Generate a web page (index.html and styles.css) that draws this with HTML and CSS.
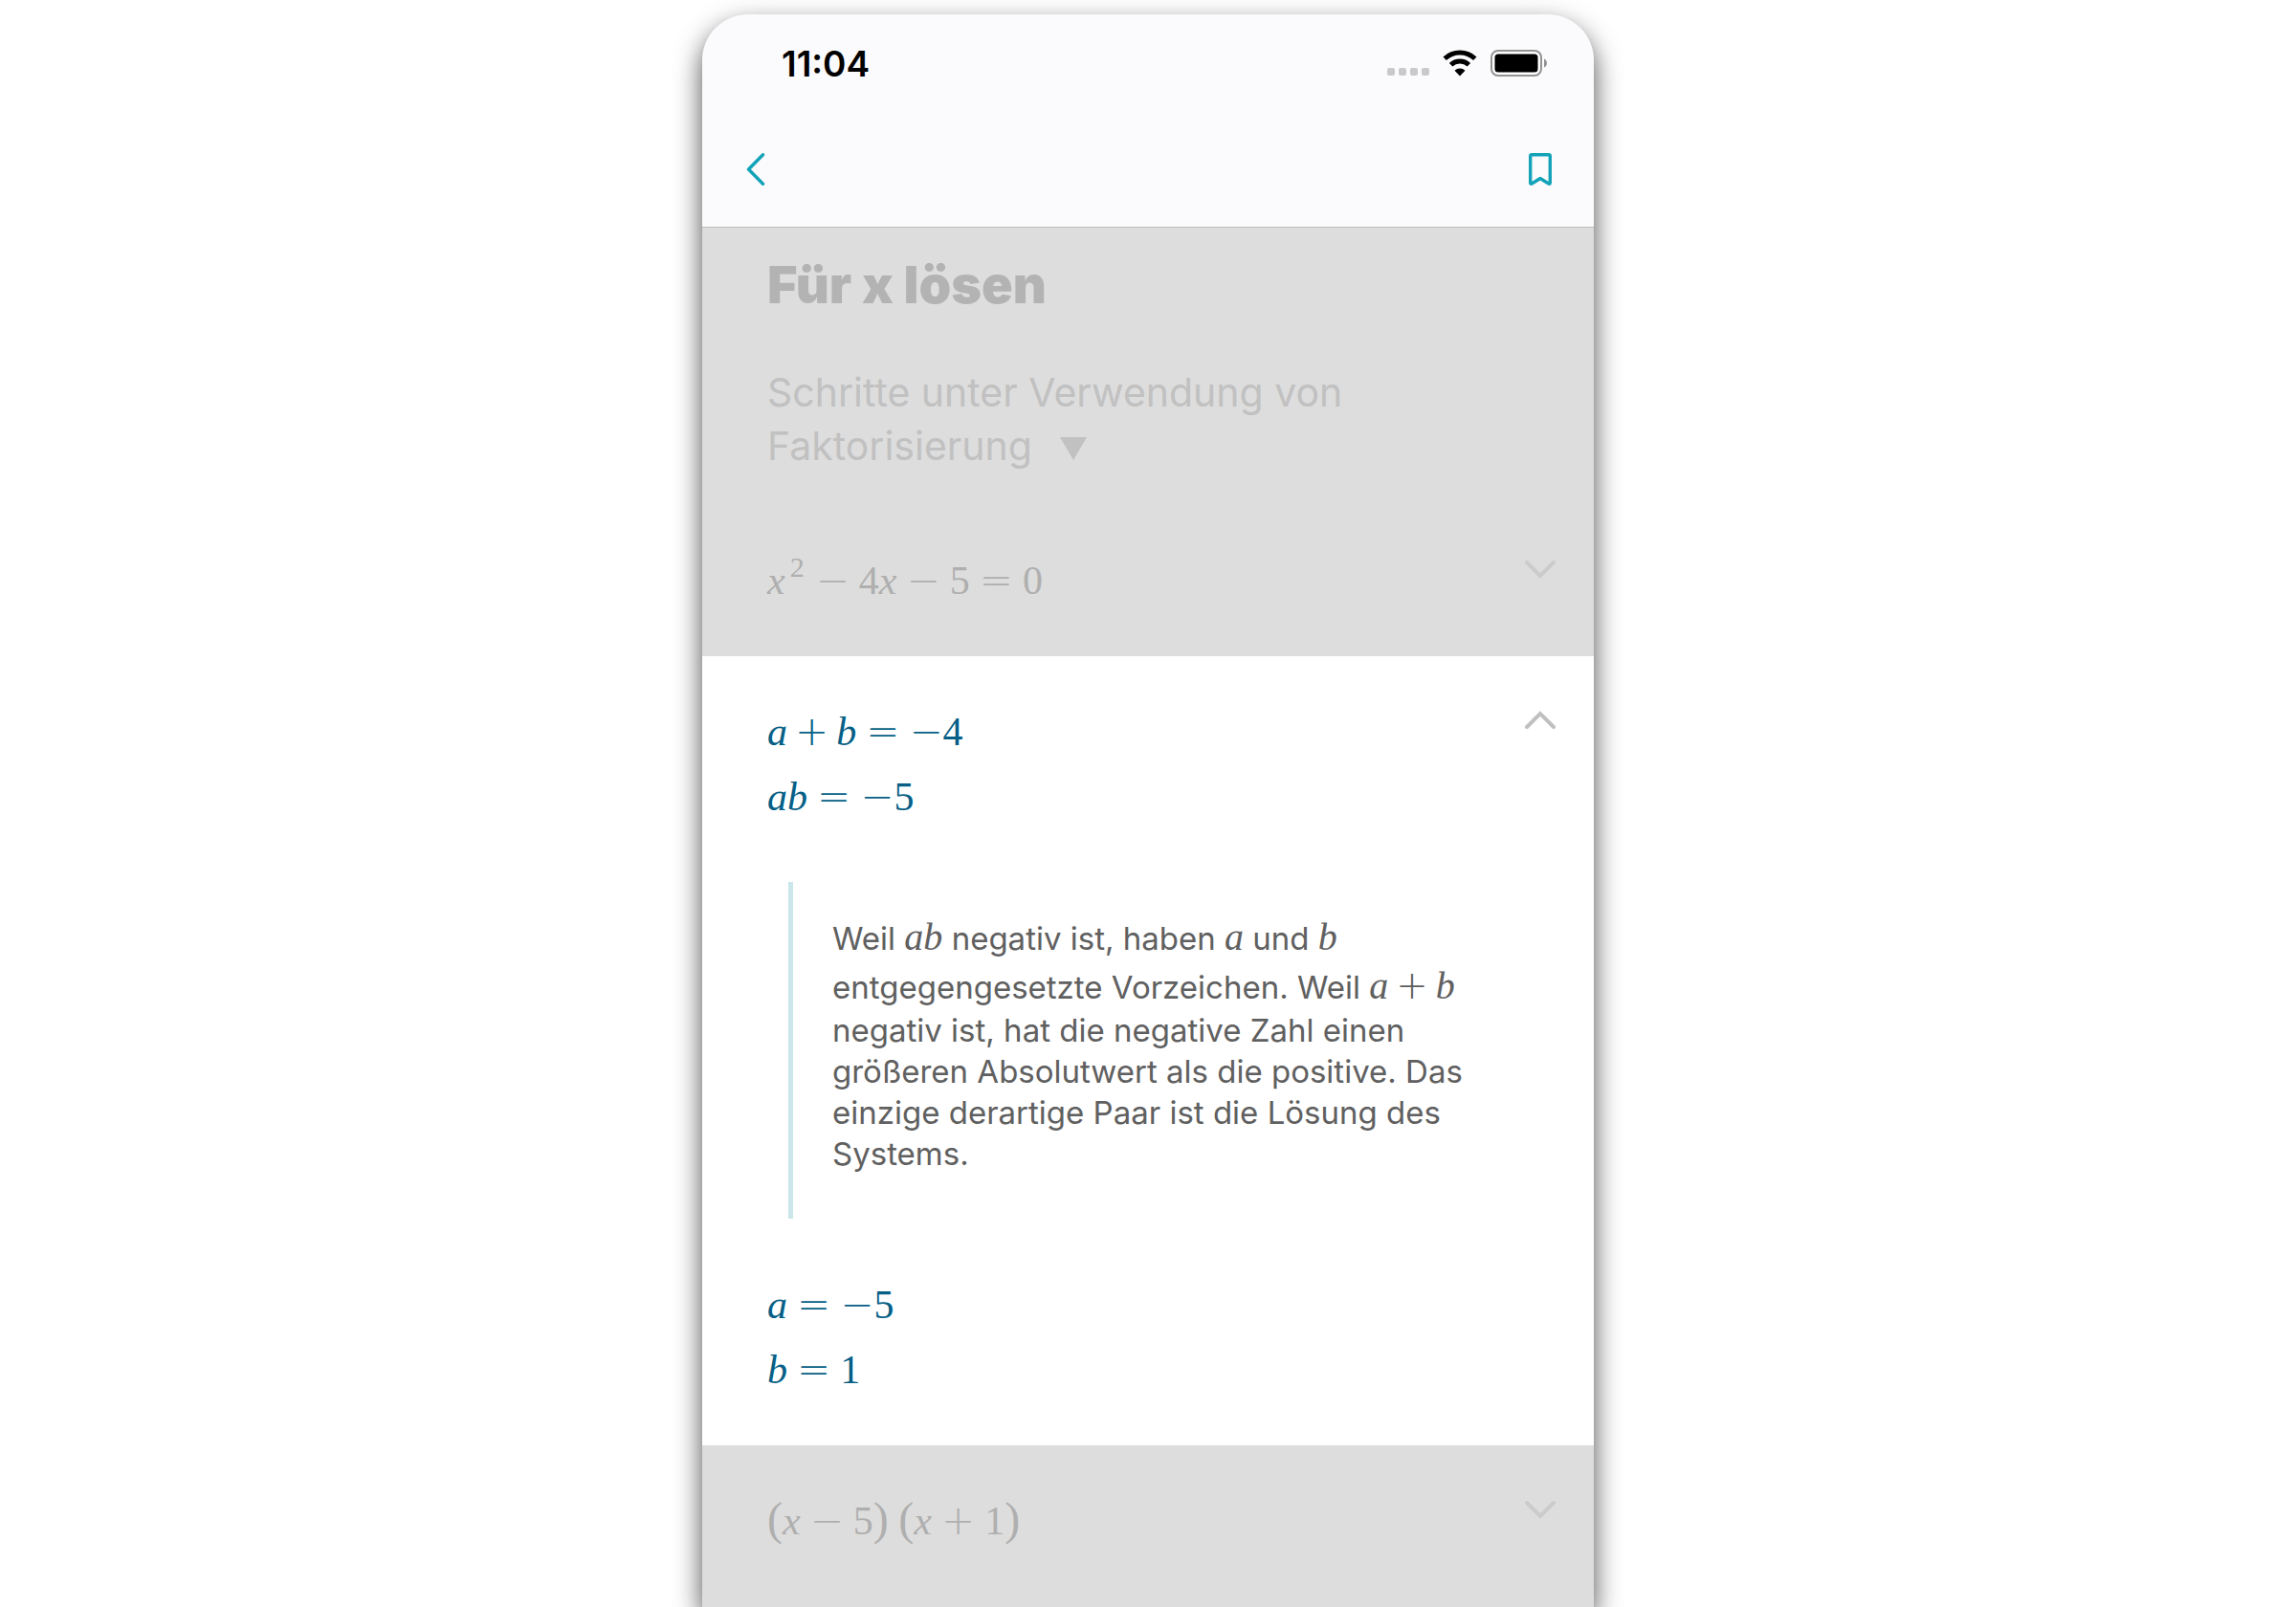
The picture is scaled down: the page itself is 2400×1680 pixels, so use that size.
FILE: index.html
```
<!DOCTYPE html>
<html lang="de">
<head>
    <meta charset="UTF-8">
    <meta name="viewport" content="width=device-width, initial-scale=1.0">
    <title>Für x lösen</title>
    <link rel="stylesheet" href="styles.css">
</head>
<body>
    <div class="phone">
        <header class="top">
            <div class="status-bar">
                <span class="time">11:04</span>
                <div class="status-icons">
                    <div class="signal"><i></i><i></i><i></i><i></i></div>
                    <svg class="wifi" viewBox="0 0 36 28" width="36" height="28">
                        <path d="M2.2 9.2A23 23 0 0 1 33.8 9.2" fill="none" stroke="#000" stroke-width="5"/>
                        <path d="M8.6 15.8A13.6 13.6 0 0 1 27.4 15.8" fill="none" stroke="#000" stroke-width="5"/>
                        <path d="M18 27.500L12.500 21.700A8 8 0 0 1 23.500 21.700Z"/>
                    </svg>
                    <svg class="battery" viewBox="0 0 60 28" width="60" height="28">
                        <rect x="1" y="1" width="52" height="26" rx="7" fill="#fff" stroke="#949494" stroke-width="2"/>
                        <rect x="4.500" y="4.500" width="45" height="19" rx="3.500"/>
                        <path d="M56 9.500Q59 11 59 14T56 18.500Z" fill="#949494"/>
                    </svg>
                </div>
            </div>
            <nav class="nav-bar">
                <button class="icon-btn" aria-label="Zurück">
                    <svg viewBox="0 0 20 34" width="20" height="34"><path d="M17.500 1.800L2.500 17L17.500 32.200"/></svg>
                </button>
                <button class="icon-btn" aria-label="Lesezeichen">
                    <svg viewBox="0 0 24 34" width="24" height="34"><path d="M1.700 3.200Q1.700 1.700 3.200 1.700H20.800Q22.300 1.700 22.300 3.200V31Q22.300 32.800 20.800 32L12 26.500L3.200 32Q1.700 32.800 1.700 31Z"/></svg>
                </button>
            </nav>
        </header>

        <main>
            <section class="intro">
                <h1>Für x lösen</h1>
                <button class="method">Schritte unter Verwendung von<br>Faktorisierung <span class="arrow"></span></button>
            </section>

            <section class="step dimmed">
                <div class="math"><p><i>x</i><sup>2</sup><b>−</b>4<i>x</i><b>−</b>5<b class="rel">=</b>0</p></div>
                <button class="toggle" aria-label="Aufklappen">
                    <svg viewBox="0 0 32 20" width="32" height="20"><path d="M2 3L16 17L30 3"/></svg>
                </button>
            </section>

            <section class="step open">
                <div class="step-body">
                    <div class="math">
                        <p><i>a</i><b class="plus">+</b><i>b</i><b class="rel">=</b><b class="neg">−</b>4</p>
                        <p><i>ab</i><b class="rel">=</b><b class="neg">−</b>5</p>
                    </div>
                    <blockquote>
                        Weil <span class="inline-math"><i>ab</i></span> negativ ist, haben <span class="inline-math"><i>a</i></span> und <span class="inline-math"><i>b</i></span><br>
                        entgegengesetzte Vorzeichen. Weil <span class="inline-math"><i>a</i><b class="plus">+</b><i>b</i></span><br>
                        negativ ist, hat die negative Zahl einen<br>
                        größeren Absolutwert als die positive. Das<br>
                        einzige derartige Paar ist die Lösung des<br>
                        Systems.
                    </blockquote>
                    <div class="math">
                        <p><i>a</i><b class="rel">=</b><b class="neg">−</b>5</p>
                        <p><i>b</i><b class="rel">=</b>1</p>
                    </div>
                </div>
                <button class="toggle" aria-label="Zuklappen">
                    <svg viewBox="0 0 32 20" width="32" height="20"><path d="M2 17L16 3L30 17"/></svg>
                </button>
            </section>

            <section class="step dimmed">
                <div class="math"><p><span class="paren">(</span><i>x</i><b>−</b>5<span class="paren">)</span> <span class="paren">(</span><i>x</i><b>+</b>1<span class="paren">)</span></p></div>
                <button class="toggle" aria-label="Aufklappen">
                    <svg viewBox="0 0 32 20" width="32" height="20"><path d="M2 3L16 17L30 3"/></svg>
                </button>
            </section>
        </main>
    </div>
</body>
</html>
```
FILE: styles.css
```
* {
    box-sizing: border-box;
}

body {
    margin: 0;
    padding-top: 15px;
    height: 100vh;
    overflow: hidden;
    background: #fff;
    font-family: Inter, "Liberation Sans", sans-serif;
}

p, h1, blockquote {
    margin: 0;
}

button {
    margin: 0;
    padding: 0;
    border: none;
    background: none;
    font: inherit;
    color: inherit;
    cursor: pointer;
}

svg {
    display: block;
}

/* Phone frame */
.phone {
    max-width: 932px;
    min-height: 100%;
    margin: 0 auto;
    border-radius: 48px 48px 0 0;
    background: #ddd;
    box-shadow: 0 12px 28px rgba(0, 0, 0, 0.7);
    overflow: hidden;
}

/* Status bar and navigation */
.top {
    background: #fbfbfd;
    border-bottom: 1px solid #bebebe;
}

.status-bar {
    display: flex;
    justify-content: space-between;
    align-items: center;
    height: 102px;
    padding: 0 48px 0 83px;
}

.time {
    font-size: 37px;
    font-weight: 600;
}

.status-icons {
    display: flex;
    align-items: center;
    gap: 14px;
}

.signal {
    display: flex;
    gap: 4px;
    padding-top: 18px;
}

.signal i {
    width: 8px;
    height: 8px;
    border-radius: 2px;
    background: #c9c9cb;
}

.nav-bar {
    display: flex;
    justify-content: space-between;
    align-items: center;
    height: 120px;
    padding: 0 44px 0 46px;
}

.icon-btn path {
    fill: none;
    stroke: #12a3b8;
    stroke-width: 3.4;
    stroke-linecap: round;
    stroke-linejoin: round;
}

/* Heading */
.intro {
    padding: 26px 68px 0;
}

h1 {
    font-size: 54px;
    font-weight: 900;
    line-height: 68px;
    color: #b3b3b3;
}

.method {
    margin-top: 50px;
    font-size: 41px;
    line-height: 56px;
    text-align: left;
    color: #c1c1c1;
}

.arrow {
    display: inline-block;
    margin-left: 18px;
    border: 14px solid transparent;
    border-top: 24px solid #c1c1c1;
    border-bottom: 0;
}

/* Solution steps */
.step {
    display: flex;
    justify-content: space-between;
    align-items: flex-start;
    padding: 45px 40px 45px 68px;
}

.step.dimmed {
    color: #afafaf;
}

.intro + .step {
    padding-top: 79px;
}

.step.open {
    background: #fff;
    color: #065f86;
}

.math, .inline-math {
    font-family: "Liberation Serif", "Times New Roman", serif;
}

.math {
    font-size: 42px;
    line-height: 68px;
}

.math sup {
    margin: 0 2px 0 5px;
    font-size: 30px;
    line-height: 0;
    vertical-align: 18px;
}

/* Operators */
.math b, .inline-math b {
    font-family: "DejaVu Sans Light", "DejaVu Sans", sans-serif;
    font-weight: 200;
    line-height: 0;
    margin: 0 10px;
}

.math .plus, .inline-math .plus {
    margin: 0 8px;
}

.math .rel {
    margin: 0 10px;
}

.math .neg {
    margin: 0;
}

.paren {
    font-size: 48px;
    line-height: 0;
}

.toggle {
    padding-top: 12px;
}

.toggle path {
    fill: none;
    stroke: #c0c0c0;
    stroke-width: 4;
    stroke-linecap: round;
}

.dimmed .toggle path {
    stroke: #cbcbcb;
}

/* Explanation */
blockquote {
    margin: 55px 0 56px 22px;
    padding: 32px 0 46px 41px;
    border-left: 5px solid #cce7ec;
    font-size: 33px;
    line-height: 43px;
    color: #606060;
}

.inline-math {
    font-size: 40px;
    line-height: 51px;
}
```
